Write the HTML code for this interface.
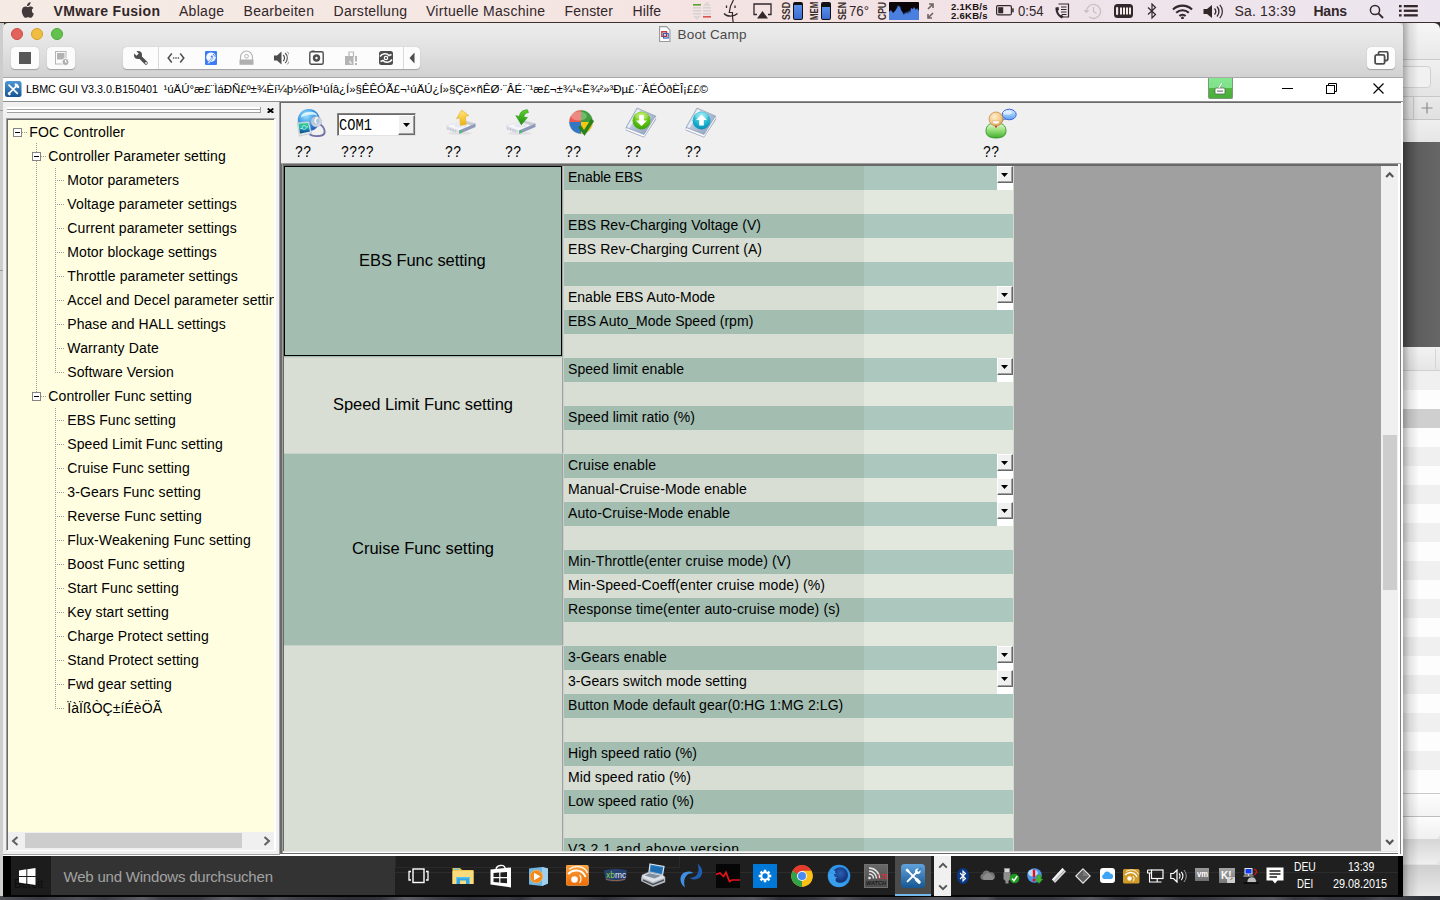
<!DOCTYPE html>
<html lang="de"><head><meta charset="utf-8"><title>LBMC GUI - Boot Camp</title>
<style>
html,body{margin:0;padding:0}
body{width:1440px;height:900px;overflow:hidden;position:relative;background:#2a2c32;font-family:"Liberation Sans",sans-serif;font-kerning:none}
.b{position:absolute;display:block;box-sizing:border-box}
.t{position:absolute;white-space:pre;display:block}
.clip{position:absolute;overflow:hidden}

</style></head>
<body>
<div class="b" style="left:0px;top:0px;width:1440px;height:900px;background:#2c2e34;"></div>
<div class="b" style="left:0px;top:890px;width:1440px;height:10px;background:linear-gradient(90deg,#4e5157 0px,#383b41 39px,#4e5157 78px,#383b41 104px,#5c5f65 143px,#3c3f45 161px,#383b41 198px,#5c5f65 225px,#3c3f45 262px,#4e5157 277px,#3c3f45 298px,#383b41 312px,#2c2f35 349px,#303339 380px,#5c5f65 406px,#3c3f45 438px,#2c2f35 469px,#383b41 507px,#2c2f35 521px,#484b51 534px,#484b51 574px,#2c2f35 605px,#4e5157 641px,#4e5157 663px,#484b51 693px,#484b51 721px,#56595f 753px,#2c2f35 780px,#34373d 813px,#56595f 839px,#383b41 864px,#34373d 902px,#56595f 936px,#484b51 958px,#56595f 986px,#34373d 998px,#34373d 1028px,#34373d 1052px,#56595f 1091px,#34373d 1115px,#2c2f35 1127px,#484b51 1145px,#4e5157 1158px,#303339 1182px,#34373d 1207px,#484b51 1237px,#56595f 1273px,#34373d 1295px,#404349 1316px,#303339 1328px,#34373d 1364px,#484b51 1380px,#34373d 1414px,#2c2f35 1426px);"></div>
<div class="b" style="left:0px;top:23px;width:4px;height:873px;background:#cdcdcd;"></div>
<div class="b" style="left:0px;top:110px;width:3px;height:1px;background:#9a9a9a;"></div>
<div class="b" style="left:0px;top:270px;width:3px;height:1px;background:#9a9a9a;"></div>
<div class="clip" style="left:1403px;top:23px;width:37px;height:873px">
<div class="b" style="left:0px;top:0px;width:37px;height:36px;background:linear-gradient(#f6f6f6,#e9e9e9);border-radius:0 6px 0 0;"></div>
<div class="b" style="left:0px;top:36px;width:37px;height:1px;background:#c9c9c9;"></div>
<div class="b" style="left:0px;top:37px;width:37px;height:36px;background:linear-gradient(#f0f0f0,#e4e4e4);"></div>
<div class="b" style="left:-8px;top:43px;width:36px;height:22px;background:#f1f1f1;border:1px solid #d0d0d0;border-radius:4px;"></div>
<div class="b" style="left:0px;top:73px;width:37px;height:24px;background:linear-gradient(#e9e9e9,#e0e0e0);border-top:1px solid #c8c8c8;border-bottom:1px solid #c4c4c4;"></div>
<div class="b" style="left:10px;top:74px;width:1px;height:22px;background:#c6c6c6;"></div>
<svg class="b" style="left:18px;top:79px;" width="12" height="12" viewBox="0 0 12 12"><path d="M6 0.5 V11.5 M0.5 6 H11.5" stroke="#8a8a8a" stroke-width="1.2"/></svg>
<div class="b" style="left:0px;top:97px;width:37px;height:22px;background:linear-gradient(#efefef,#e6e6e6);"></div>
<div class="b" style="left:0px;top:119px;width:37px;height:205px;background:linear-gradient(90deg,#4f4f4f,#5e5e5e 40%,#676767);"></div>
<div class="b" style="left:0px;top:324px;width:37px;height:24px;background:linear-gradient(#f2f2f2,#e6e6e6);border-bottom:1px solid #d0d0d0;"></div>
<div class="b" style="left:32px;top:326px;width:1px;height:20px;background:#d4d4d4;"></div>
<div class="b" style="left:0px;top:348px;width:37px;height:19px;background:#f0f0f0;"></div>
<div class="b" style="left:0px;top:367px;width:37px;height:19px;background:#fdfdfd;"></div>
<div class="b" style="left:0px;top:386px;width:37px;height:19px;background:#cfcfcf;"></div>
<div class="b" style="left:0px;top:405px;width:37px;height:19px;background:#fdfdfd;"></div>
<div class="b" style="left:0px;top:424px;width:37px;height:19px;background:#f0f0f0;"></div>
<div class="b" style="left:0px;top:443px;width:37px;height:19px;background:#fdfdfd;"></div>
<div class="b" style="left:0px;top:462px;width:37px;height:19px;background:#f0f0f0;"></div>
<div class="b" style="left:0px;top:481px;width:37px;height:19px;background:#fdfdfd;"></div>
<div class="b" style="left:0px;top:500px;width:37px;height:19px;background:#f0f0f0;"></div>
<div class="b" style="left:0px;top:519px;width:37px;height:19px;background:#fdfdfd;"></div>
<div class="b" style="left:0px;top:538px;width:37px;height:19px;background:#f0f0f0;"></div>
<div class="b" style="left:0px;top:557px;width:37px;height:19px;background:#fdfdfd;"></div>
<div class="b" style="left:0px;top:576px;width:37px;height:19px;background:#f0f0f0;"></div>
<div class="b" style="left:0px;top:595px;width:37px;height:19px;background:#fdfdfd;"></div>
<div class="b" style="left:0px;top:614px;width:37px;height:19px;background:#f0f0f0;"></div>
<div class="b" style="left:0px;top:633px;width:37px;height:19px;background:#fdfdfd;"></div>
<div class="b" style="left:0px;top:652px;width:37px;height:19px;background:#f0f0f0;"></div>
<div class="b" style="left:0px;top:671px;width:37px;height:19px;background:#fdfdfd;"></div>
<div class="b" style="left:0px;top:690px;width:37px;height:19px;background:#f0f0f0;"></div>
<div class="b" style="left:0px;top:709px;width:37px;height:19px;background:#fdfdfd;"></div>
<div class="b" style="left:0px;top:728px;width:37px;height:19px;background:#f0f0f0;"></div>
<div class="b" style="left:0px;top:747px;width:37px;height:19px;background:#fdfdfd;"></div>
<div class="b" style="left:0px;top:766px;width:37px;height:19px;background:#f0f0f0;"></div>
<div class="b" style="left:0px;top:766px;width:37px;height:107px;background:#e4e4e4;"></div>
<div class="b" style="left:0px;top:766px;width:37px;height:4px;background:#fdfdfd;"></div>
<div class="b" style="left:0px;top:770px;width:37px;height:23px;background:linear-gradient(#fdfdfd,#f3f3f3);border-top:1px solid #c9c9c9;"></div>
<div class="b" style="left:0px;top:793px;width:37px;height:23px;background:linear-gradient(#fcfcfc,#f0f0f0);border-top:1px solid #bdbdbd;border-radius:0 0 6px 0;"></div>
<div class="b" style="left:0px;top:842px;width:37px;height:31px;background:linear-gradient(#cfcfcf,#e9e9e9);"></div>
<div class="b" style="left:0px;top:816px;width:37px;height:25px;background:linear-gradient(#d6d6d6,#efefef);border-radius:0 0 6px 0;"></div>
<div class="b" style="left:0px;top:793px;width:37px;height:23px;background:linear-gradient(#fcfcfc,#f0f0f0);border-top:1px solid #bdbdbd;border-radius:0 0 6px 0;"></div>
<div class="b" style="left:0px;top:0px;width:16px;height:873px;background:linear-gradient(90deg,rgba(0,0,0,.30),rgba(0,0,0,.10) 40%,rgba(0,0,0,0));"></div>
</div>
<div class="b" style="left:1394px;top:23px;width:9px;height:10px;background:#cfcfcf;"></div>
<div class="b" style="left:0px;top:0px;width:1440px;height:22px;background:linear-gradient(90deg,#f5ebe4,#f5e6e2 35%,#f4e2e3 55%,#efe3ea 75%,#ece5ef);"></div>
<div class="b" style="left:0px;top:22px;width:1440px;height:1px;background:#3b302c;"></div>
<svg class="b" style="left:19.5px;top:2px;" width="14" height="16.8" viewBox="0 0 15 18"><path fill="#43383a" d="M10.3 3.1c.7-.8 1.1-1.9 1-3-1 .1-2.1.7-2.8 1.500-.6.700-1.100 1.800-1 2.800 1.100.1 2.100-.5 2.800-1.300zM12.700 9.500c0-2 1.600-2.900 1.700-3-.9-1.400-2.400-1.500-2.900-1.600-1.200-.1-2.400.7-3 .7s-1.600-.7-2.600-.7c-1.300 0-2.600.8-3.300 2-1.400 2.400-.4 6 1 8 .7 1 1.500 2.100 2.500 2 1-.0 1.400-.6 2.600-.6s1.600.6 2.600.6c1.100 0 1.800-1 2.400-2 .8-1.100 1.100-2.200 1.100-2.300-.0-.0-2.100-.8-2.100-3.100z"/></svg>
<span class="t" style="left:53.50px;top:0.50px;font:700 14px/21px 'Liberation Sans', sans-serif;color:#32272a;letter-spacing:0.318px;">VMware Fusion</span>
<span class="t" style="left:179.00px;top:0.50px;font:400 14px/21px 'Liberation Sans', sans-serif;color:#32272a;letter-spacing:0.281px;">Ablage</span>
<span class="t" style="left:243.50px;top:0.50px;font:400 14px/21px 'Liberation Sans', sans-serif;color:#32272a;letter-spacing:0.309px;">Bearbeiten</span>
<span class="t" style="left:333.50px;top:0.50px;font:400 14px/21px 'Liberation Sans', sans-serif;color:#32272a;letter-spacing:0.267px;">Darstellung</span>
<span class="t" style="left:426.00px;top:0.50px;font:400 14px/21px 'Liberation Sans', sans-serif;color:#32272a;letter-spacing:0.286px;">Virtuelle Maschine</span>
<span class="t" style="left:564.50px;top:0.50px;font:400 14px/21px 'Liberation Sans', sans-serif;color:#32272a;letter-spacing:0.172px;">Fenster</span>
<span class="t" style="left:632.50px;top:0.50px;font:400 14px/21px 'Liberation Sans', sans-serif;color:#32272a;letter-spacing:0.121px;">Hilfe</span>
<svg class="b" style="left:693px;top:0px;" width="19" height="22" viewBox="0 0 19 22"><rect x="0" y="4" width="8" height="1.6" fill="#5aa02c"/><rect x="10" y="7" width="8" height="1.6" fill="#d9d2d2"/><rect x="0" y="7" width="8" height="1.6" fill="#d9d2d2"/><rect x="10" y="10" width="8" height="1.6" fill="#d9d2d2"/><rect x="0" y="10" width="8" height="1.6" fill="#d9d2d2"/><rect x="10" y="13" width="8" height="1.6" fill="#d9d2d2"/><rect x="0" y="13" width="8" height="1.6" fill="#d9d2d2"/><rect x="10" y="16" width="8" height="1.6" fill="#d9534f"/><path d="M10 6 L14 1.5 L18 6 Z" fill="#dcd5d5"/><path d="M0 16 L4 20 L8 16 Z" fill="#dcd5d5"/></svg>
<svg class="b" style="left:723px;top:0px;" width="16" height="22" viewBox="0 0 16 22"><path d="M10.500 0 C8 4 6.500 8.500 6.200 12.500 H9.500 C9.300 15.500 9.600 19 10.200 22" stroke="#32272a" stroke-width="1.2" fill="none"/><path d="M1 13.500 C4 17 11 17 14.500 13.500" stroke="#32272a" stroke-width="1.200" fill="none"/><path d="M3.500 5.500 V8 M12 5.500 V8" stroke="#32272a" stroke-width="1.300"/></svg>
<svg class="b" style="left:753px;top:3px;" width="19" height="16" viewBox="0 0 19 16"><path d="M4 11.500 H1 V1 H18 V11.500 H15" stroke="#32272a" stroke-width="1.300" fill="none"/><path d="M9.500 8 L15 15.500 H4 Z" fill="#32272a"/></svg>
<span class="t" style="left:783px;top:19.900px;height:7px;font:700 10.500px/7px 'Liberation Sans', sans-serif;color:#3a302c;transform-origin:0 0;transform:rotate(-90deg) scaleX(0.8346);">SSD</span>
<div class="b" style="left:793px;top:2px;width:10px;height:18px;background:#111;border-radius:2px;"></div>
<div class="b" style="left:794px;top:5px;width:8px;height:14px;background:linear-gradient(#5b8fe8,#3a6cd0);border-radius:0 0 1px 1px;"></div>
<span class="t" style="left:811px;top:19.900px;height:7px;font:700 10.500px/7px 'Liberation Sans', sans-serif;color:#3a302c;transform-origin:0 0;transform:rotate(-90deg) scaleX(0.7383);">MEM</span>
<div class="b" style="left:821px;top:2px;width:10px;height:18px;background:#111;border-radius:2px;"></div>
<div class="b" style="left:822px;top:7px;width:8px;height:12px;background:linear-gradient(#5b8fe8,#3a6cd0);border-radius:0 0 1px 1px;"></div>
<span class="t" style="left:839px;top:19.900px;height:7px;font:700 10.500px/7px 'Liberation Sans', sans-serif;color:#3a302c;transform-origin:0 0;transform:rotate(-90deg) scaleX(0.8346);">SEN</span>
<span class="t" style="left:849.00px;top:1.00px;font:400 14px/21px 'Liberation Sans', sans-serif;color:#32272a;transform-origin:0 50%;transform:scaleX(0.9446);">76°</span>
<span class="t" style="left:879px;top:19.900px;height:7px;font:700 10.500px/7px 'Liberation Sans', sans-serif;color:#3a302c;transform-origin:0 0;transform:rotate(-90deg) scaleX(0.8132);">CPU</span>
<div class="b" style="left:889px;top:2px;width:30px;height:18px;background:#0b0508;border-radius:1px;"></div>
<svg class="b" style="left:889px;top:2px;" width="30" height="18" viewBox="0 0 30 18"><path d="M0 18 V10 L2 8 L4 11 L6 9 L8 6 L9 3 L10 5 L11 4 L12 8 L14 11 L15 13 L16 10 L17 12 L18 9 L19 12 L20 8 L21 11 L22 6 L24 7 L25 5 L27 8 L28 6 L30 9 V18 Z" fill="#4a7fdf"/></svg>
<svg class="b" style="left:926px;top:3px;" width="9" height="16" viewBox="0 0 9 16"><path d="M2 6 L7 1 M3 1 H7 V5" stroke="#6d6663" stroke-width="1.600" fill="none"/><path d="M7 10 L2 15 M2 11 V15 H6" stroke="#6d6663" stroke-width="1.600" fill="none"/></svg>
<span class="t" style="left:951.00px;top:-0.50px;font:700 9.5px/14px 'Liberation Sans', sans-serif;color:#15100e;letter-spacing:0.273px;">2.1KB/s</span>
<span class="t" style="left:951.00px;top:8.50px;font:700 9.5px/14px 'Liberation Sans', sans-serif;color:#15100e;letter-spacing:0.273px;">2.6KB/s</span>
<svg class="b" style="left:996px;top:5px;" width="18" height="11" viewBox="0 0 18 11"><rect x="0.600" y="0.600" width="14.800" height="9.300" rx="1.500" fill="none" stroke="#32272a" stroke-width="1.200"/><rect x="2.200" y="2.200" width="5" height="6.100" fill="#32272a"/><rect x="16.200" y="3.300" width="1.500" height="4" fill="#32272a"/></svg>
<span class="t" style="left:1017.50px;top:1.00px;font:400 14px/21px 'Liberation Sans', sans-serif;color:#32272a;transform-origin:0 50%;transform:scaleX(0.9358);">0:54</span>
<svg class="b" style="left:1054px;top:3px;" width="16" height="17" viewBox="0 0 16 17"><path d="M4.500 1 H14.500 V14 H9" stroke="#32272a" stroke-width="1.200" fill="none"/><path d="M7 4 H12.500 M7 6.500 H12.500 M7 9 H12.500 M8 11.500 H12.500" stroke="#32272a" stroke-width="1"/><path d="M1.500 4.500 C1 9 4 14 8 15.500 L9.500 13.500 L7.500 11.500 L6.500 12.200 C5 11 4 9 3.800 7.500 L5 7 L4.500 4 Z" fill="#32272a"/></svg>
<svg class="b" style="left:1083px;top:2px;" width="19" height="18" viewBox="0 0 19 18"><path d="M3.500 9.500 A7 7 0 1 1 6 14.800" stroke="#c9c2c2" stroke-width="1.400" fill="none"/><path d="M0.500 8 L3.500 11.500 L6.300 8 Z" fill="#c9c2c2"/><path d="M10.500 5 V9.500 L13.500 11.500" stroke="#c9c2c2" stroke-width="1.300" fill="none"/></svg>
<svg class="b" style="left:1114px;top:4px;" width="19" height="14" viewBox="0 0 19 14"><rect x="0" y="0" width="19" height="14" rx="3.500" fill="#32272a"/><rect x="2" y="3" width="2.200" height="8" rx="1" fill="#f1e8e8"/><rect x="6" y="3.500" width="2" height="7" fill="#f1e8e8"/><rect x="9" y="3.500" width="2" height="7" fill="#f1e8e8"/><rect x="12" y="3.500" width="2" height="7" fill="#f1e8e8"/><rect x="15" y="3.500" width="2" height="7" fill="#f1e8e8"/></svg>
<svg class="b" style="left:1147px;top:3px;" width="10" height="16" viewBox="0 0 10 16"><path d="M1 4.500 L8.500 11.500 L5 15 V1 L8.500 4.500 L1 11.500" stroke="#32272a" stroke-width="1.200" fill="none"/></svg>
<svg class="b" style="left:1172px;top:4px;" width="21" height="15" viewBox="0 0 21 15"><path d="M1 5.500 A13.500 13.500 0 0 1 20 5.500" stroke="#32272a" stroke-width="2.100" fill="none"/><path d="M4.200 8.800 A9 9 0 0 1 16.800 8.800" stroke="#32272a" stroke-width="2.100" fill="none"/><path d="M7.400 12 A4.500 4.500 0 0 1 13.600 12" stroke="#32272a" stroke-width="2.100" fill="none"/><circle cx="10.500" cy="14" r="1.400" fill="#32272a"/></svg>
<svg class="b" style="left:1203px;top:4px;" width="21" height="15" viewBox="0 0 21 15"><path d="M0.500 5 H4 L9 1 V14 L4 10 H0.500 Z" fill="#32272a"/><path d="M11.500 4.500 A4.500 4.500 0 0 1 11.500 10.500" stroke="#32272a" stroke-width="1.300" fill="none"/><path d="M14 2.500 A7.500 7.500 0 0 1 14 12.500" stroke="#32272a" stroke-width="1.300" fill="none"/><path d="M16.800 0.800 A10 10 0 0 1 16.800 14.200" stroke="#32272a" stroke-width="1.200" fill="none"/></svg>
<span class="t" style="left:1234.50px;top:1.00px;font:400 14px/21px 'Liberation Sans', sans-serif;color:#32272a;letter-spacing:0.170px;">Sa. 13:39</span>
<span class="t" style="left:1313.50px;top:1.00px;font:700 14px/21px 'Liberation Sans', sans-serif;color:#32272a;letter-spacing:-0.245px;">Hans</span>
<svg class="b" style="left:1369px;top:4px;" width="15" height="15" viewBox="0 0 15 15"><circle cx="6" cy="6" r="4.600" stroke="#32272a" stroke-width="1.500" fill="none"/><path d="M9.400 9.400 L14 14" stroke="#32272a" stroke-width="1.900"/></svg>
<svg class="b" style="left:1398.5px;top:5px;" width="19" height="12" viewBox="0 0 19 12"><rect x="0" y="0" width="2.600" height="2.300" fill="#32272a"/><rect x="4.800" y="0" width="14" height="2.300" fill="#32272a"/><rect x="0" y="4.6" width="2.600" height="2.300" fill="#32272a"/><rect x="4.800" y="4.6" width="14" height="2.300" fill="#32272a"/><rect x="0" y="9.2" width="2.600" height="2.300" fill="#32272a"/><rect x="4.800" y="9.2" width="14" height="2.300" fill="#32272a"/></svg>
<div class="b" style="left:3px;top:23px;width:1400px;height:55px;background:linear-gradient(#ededed,#e2e2e2 45%,#d1d1d1);border-radius:5px 5px 0 0;"></div>
<div class="b" style="left:3px;top:77px;width:1400px;height:1px;background:#a9a9a9;"></div>
<div class="b" style="left:11px;top:28px;width:12px;height:12px;background:#e2635c;border-radius:50%;border:1px solid #cf4a43;"></div>
<div class="b" style="left:31px;top:28px;width:12px;height:12px;background:#efbd3f;border-radius:50%;border:1px solid #d8a02c;"></div>
<div class="b" style="left:51px;top:28px;width:12px;height:12px;background:#62c24c;border-radius:50%;border:1px solid #4ea83a;"></div>
<svg class="b" style="left:659px;top:25.5px;" width="11.5" height="16.1" viewBox="0 0 10 14"><path d="M0.500 0.500 H6.500 L9.500 3.500 V13.500 H0.500 Z" fill="#fff" stroke="#9a9a9a" stroke-width="1"/><rect x="2.500" y="5" width="4" height="4" fill="none" stroke="#c03030" stroke-width="1.200"/><rect x="4" y="6.500" width="4" height="4" fill="none" stroke="#3060c0" stroke-width="1"/></svg>
<span class="t" style="left:677.50px;top:24.50px;font:400 13.5px/20px 'Liberation Sans', sans-serif;color:#4a4a4a;letter-spacing:0.182px;">Boot Camp</span>
<div class="b" style="left:11px;top:47px;width:28px;height:22px;background:#fcfcfc;border-radius:4px;box-shadow:0 .5px 1px rgba(0,0,0,.25);"></div>
<div class="b" style="left:19px;top:52px;width:12px;height:12px;background:#585858;"></div>
<div class="b" style="left:47px;top:47px;width:28px;height:22px;background:#fbfbfb;border-radius:4px;box-shadow:0 .5px 1px rgba(0,0,0,.25);"></div>
<svg class="b" style="left:55px;top:51px;" width="15" height="15" viewBox="0 0 15 15"><rect x="0.500" y="0.500" width="10.500" height="12.500" fill="none" stroke="#b5b5b5" stroke-width="1"/><rect x="2" y="2" width="7.500" height="6.500" fill="#b2b2b2"/><circle cx="10.500" cy="11" r="3.600" fill="#b0b0b0" stroke="#fbfbfb" stroke-width="1"/><path d="M10.500 9 V11 H12" stroke="#fff" stroke-width="1" fill="none"/></svg>
<div class="b" style="left:123px;top:47px;width:297px;height:22px;background:#fcfcfc;border-radius:4px;box-shadow:0 .5px 1px rgba(0,0,0,.25);"></div>
<div class="b" style="left:158px;top:47px;width:1px;height:22px;background:#d9d9d9;"></div>
<div class="b" style="left:403px;top:47px;width:1px;height:22px;background:#d9d9d9;"></div>
<svg class="b" style="left:133px;top:50px;" width="16" height="16" viewBox="0 0 16 16"><circle cx="5" cy="5" r="4" fill="#4d4d4d"/><path d="M5 5 L13 13" stroke="#4d4d4d" stroke-width="3.400" stroke-linecap="round"/><path d="M4.600 4.600 L0 0" stroke="#fcfcfc" stroke-width="3.200"/><circle cx="13" cy="13" r="0.900" fill="#fcfcfc"/></svg>
<svg class="b" style="left:167px;top:52px;" width="18" height="12" viewBox="0 0 18 12"><path d="M4.800 1.500 L1.200 6 L4.800 10.500 M13.200 1.500 L16.800 6 L13.200 10.500" stroke="#4d4d4d" stroke-width="1.500" fill="none"/><rect x="5.900" y="5.300" width="1.400" height="1.400" fill="#4d4d4d"/><rect x="8.300" y="5.300" width="1.400" height="1.400" fill="#4d4d4d"/><rect x="10.700" y="5.300" width="1.400" height="1.400" fill="#4d4d4d"/></svg>
<svg class="b" style="left:205px;top:51px;" width="12" height="14" viewBox="0 0 12 14"><rect x="0" y="0" width="12" height="14" rx="1" fill="#3d7cf4"/><circle cx="6" cy="6.200" r="4.800" fill="#f4f8ff"/><circle cx="6.800" cy="5.500" r="1.100" fill="#3d7cf4"/><path d="M2.200 12.200 L7.200 6.200 L8.200 7 L4 12.800 Z" fill="#f4f8ff" stroke="#3d7cf4" stroke-width=".6"/><path d="M8 3 L10.500 6" stroke="#3d7cf4" stroke-width=".9"/></svg>
<svg class="b" style="left:239px;top:50px;" width="15" height="15" viewBox="0 0 15 15"><path d="M1.500 10 V7.500 A6 6.500 0 0 1 13.500 7.500 V10" fill="#fcfcfc" stroke="#b4b4b4" stroke-width="1.100"/><circle cx="7.500" cy="6.200" r="1.900" fill="none" stroke="#b4b4b4" stroke-width="1"/><rect x="0.500" y="9.500" width="14" height="5.300" fill="#b0b0b0"/></svg>
<svg class="b" style="left:274px;top:51px;" width="15" height="14" viewBox="0 0 15 14"><path d="M0 4.500 H3 L7.500 0.500 V13.500 L3 9.500 H0 Z" fill="#4d4d4d"/><path d="M9.200 4 A4 4 0 0 1 9.200 10" stroke="#4d4d4d" stroke-width="1.200" fill="none"/><path d="M11.200 2 A7 7 0 0 1 11.200 12" stroke="#4d4d4d" stroke-width="1.100" fill="none"/><path d="M13.300 0.500 A9.500 9.500 0 0 1 13.300 13.500" stroke="#8a8a8a" stroke-width=".9" fill="none"/></svg>
<svg class="b" style="left:309px;top:50px;" width="15" height="15" viewBox="0 0 15 15"><rect x="0.800" y="1.800" width="13.400" height="12.400" rx="1.500" fill="none" stroke="#4d4d4d" stroke-width="1.400"/><rect x="2.500" y="0.500" width="3" height="1.500" fill="#4d4d4d"/><circle cx="7.500" cy="8" r="3.700" fill="#4d4d4d"/><circle cx="7.500" cy="8" r="1.200" fill="#fcfcfc"/></svg>
<svg class="b" style="left:345px;top:51px;" width="13" height="14" viewBox="0 0 13 14"><path d="M4 6 V1 H8.500 V6" fill="none" stroke="#b8b8b8" stroke-width="1.200"/><rect x="0" y="5" width="8.500" height="9" fill="#b4b4b4"/><rect x="10" y="5" width="2" height="5.500" fill="#b4b4b4"/><rect x="10" y="12" width="2" height="2" fill="#b4b4b4"/><path d="M5 9.500 V12 H7" stroke="#fcfcfc" stroke-width="1" fill="none"/></svg>
<svg class="b" style="left:379px;top:51px;" width="14" height="14" viewBox="0 0 14 14"><rect x="0" y="0" width="14" height="14" rx="2.500" fill="#4d4d4d"/><path d="M1 5.500 C3 2 8 2 10 4.500 L12.500 3.500 M13 8.500 C11 12 6 12 4 9.500 L1.500 10.500" stroke="#fcfcfc" stroke-width="1.600" fill="none"/><circle cx="7" cy="7" r="1.700" fill="none" stroke="#fcfcfc" stroke-width="1.200"/></svg>
<svg class="b" style="left:409px;top:52px;" width="6" height="12" viewBox="0 0 6 12"><path d="M5.500 0.500 V11.500 L0.500 6 Z" fill="#4d4d4d"/></svg>
<div class="b" style="left:1367px;top:47px;width:28px;height:22px;background:#fcfcfc;border-radius:4px;box-shadow:0 .5px 1px rgba(0,0,0,.25);"></div>
<svg class="b" style="left:1374px;top:51px;" width="15" height="14" viewBox="0 0 15 14"><path d="M4.500 3.500 V2.200 A1.500 1.500 0 0 1 6 0.700 H12.300 A1.500 1.500 0 0 1 13.800 2.200 V8 A1.500 1.500 0 0 1 12.300 9.500 H11" fill="none" stroke="#4d4d4d" stroke-width="1.800"/><rect x="1.100" y="3.900" width="9.500" height="9" rx="1.500" fill="none" stroke="#4d4d4d" stroke-width="1.800"/></svg>
<div class="b" style="left:3px;top:78px;width:1400px;height:23px;background:#ffffff;"></div>
<div class="b" style="left:3px;top:101px;width:1400px;height:1px;background:#8f8f8f;"></div>
<div class="b" style="left:3px;top:102px;width:1400px;height:754px;background:#f0f0f0;"></div>
<svg class="b" style="left:5px;top:81px;" width="17" height="16" viewBox="0 0 17 16"><defs><linearGradient id="ai" x1="0" y1="0" x2="0" y2="1"><stop offset="0" stop-color="#4f97d6"/><stop offset="1" stop-color="#17558f"/></linearGradient></defs><rect x="0" y="0" width="16.500" height="16" rx="2.500" fill="url(#ai)"/><path d="M4 4.200 L12.300 12.300 M12.300 4.200 L4 12.300" stroke="#fff" stroke-width="1.700" stroke-linecap="round"/><path d="M10.800 3.600 L13 5.800" stroke="#fff" stroke-width="2.600" stroke-linecap="round"/><path d="M3.800 12.500 L4.600 13.300" stroke="#fff" stroke-width="2.200" stroke-linecap="round"/></svg>
<div class="b" style="left:1208px;top:78px;width:25px;height:21px;background:linear-gradient(#85e690 0,#7fe38a 48%,#52b640 49%,#4aae3a 100%);border:1px solid #7a9a7a;border-top:0;border-radius:0 0 2px 2px;"></div>
<svg class="b" style="left:1214px;top:82px;" width="13" height="13" viewBox="0 0 13 13"><rect x="1" y="6" width="10" height="6" rx="1" fill="#fff" stroke="#4d6a4d" stroke-width=".8"/><rect x="3" y="8.500" width="6" height="1.200" fill="#777"/><path d="M5 6 L8 1.500" stroke="#fff" stroke-width="1.400"/><path d="M5.600 6.200 L8.600 1.700" stroke="#667" stroke-width=".5"/></svg>
<div class="b" style="left:1282px;top:88px;width:11px;height:1px;background:#000;"></div>
<svg class="b" style="left:1326px;top:83px;" width="11" height="11" viewBox="0 0 11 11"><path d="M2.500 2.500 V0.500 H10.500 V8.500 H8.500" fill="none" stroke="#000" stroke-width="1"/><rect x="0.500" y="2.500" width="8" height="8" fill="none" stroke="#000" stroke-width="1"/></svg>
<svg class="b" style="left:1373px;top:83px;" width="11" height="11" viewBox="0 0 11 11"><path d="M0.500 0.500 L10.500 10.500 M10.500 0.500 L0.500 10.500" stroke="#000" stroke-width="1.200"/></svg>
<span class="t" style="left:26.00px;top:81.00px;font:400 11.5px/17px 'Liberation Sans', sans-serif;color:#000;transform-origin:0 50%;transform:scaleX(0.9343);">LBMC GUI V3.3.0.B150401</span>
<span class="t" style="left:163.50px;top:81.00px;font:400 11.5px/17px 'Liberation Sans', sans-serif;color:#000;letter-spacing:-0.066px;">¹úÄÚ°æ£¨ÌáÐÑ£º±¾Èí¼þ½öÏÞ¹úÍâ¿Í»§ÊÊÓÃ£¬¹úÄÚ¿Í»§Çë×ñÊØ·¨ÂÉ·¨¹æ£¬±¾¹«Ë¾²»³Ðµ£·¨ÂÉÔðÈÎ¡££©</span>
<div class="b" style="left:7px;top:107px;width:254px;height:2px;background:#ffffff;"></div>
<div class="b" style="left:7px;top:109px;width:254px;height:1px;background:#a0a0a0;"></div>
<div class="b" style="left:7px;top:110px;width:254px;height:2px;background:#ffffff;"></div>
<div class="b" style="left:7px;top:112px;width:254px;height:1px;background:#a0a0a0;"></div>
<div class="b" style="left:260px;top:107px;width:1px;height:6px;background:#a0a0a0;"></div>
<svg class="b" style="left:266.5px;top:107.7px;" width="7" height="5.4" viewBox="0 0 7 5.4"><path d="M0.700 0.600 L6.300 4.800 M6.300 0.600 L0.700 4.800" stroke="#000" stroke-width="1.900" fill="none"/></svg>
<div class="b" style="left:6px;top:118px;width:270px;height:733px;background:#fffee1;border:1px solid #a0a0a0;border-right:2px solid #fff;border-bottom-color:#fff;"></div>
<div class="b" style="left:7px;top:119px;width:267px;height:1px;background:#696969;"></div>
<div class="b" style="left:7px;top:119px;width:1px;height:731px;background:#696969;"></div>
<div class="b" style="left:279px;top:102px;width:1px;height:752px;background:#a0a0a0;"></div>
<div class="b" style="left:280px;top:102px;width:2px;height:752px;background:#696969;"></div>
<div class="b" style="left:8px;top:832px;width:266px;height:18px;background:#f0f0f0;"></div>
<div class="b" style="left:25px;top:833px;width:217px;height:15px;background:#cdcdcd;"></div>
<svg class="b" style="left:11px;top:836px;" width="8" height="10" viewBox="0 0 8 10"><path d="M6.5 1 L2 5 L6.5 9" stroke="#606060" stroke-width="2" fill="none"/></svg>
<svg class="b" style="left:262.5px;top:836px;" width="8" height="10" viewBox="0 0 8 10"><path d="M1.5 1 L6 5 L1.5 9" stroke="#606060" stroke-width="2" fill="none"/></svg>
<div class="b" style="left:22px;top:132px;width:5px;height:1px;background:repeating-linear-gradient(90deg,#9c9c9c 0 1px,transparent 1px 2px);"></div>
<div class="b" style="left:36px;top:143px;width:1px;height:250px;background:repeating-linear-gradient(180deg,#9c9c9c 0 1px,transparent 1px 2px);"></div>
<div class="b" style="left:41px;top:156px;width:5px;height:1px;background:repeating-linear-gradient(90deg,#9c9c9c 0 1px,transparent 1px 2px);"></div>
<div class="b" style="left:41px;top:396px;width:5px;height:1px;background:repeating-linear-gradient(90deg,#9c9c9c 0 1px,transparent 1px 2px);"></div>
<div class="b" style="left:55px;top:168px;width:1px;height:205px;background:repeating-linear-gradient(180deg,#9c9c9c 0 1px,transparent 1px 2px);"></div>
<div class="b" style="left:55px;top:408px;width:1px;height:301px;background:repeating-linear-gradient(180deg,#9c9c9c 0 1px,transparent 1px 2px);"></div>
<div class="b" style="left:13px;top:128px;width:9px;height:9px;background:#fff;border:1px solid #848484;"></div>
<div class="b" style="left:15px;top:132px;width:5px;height:1px;background:#000;"></div>
<div class="b" style="left:32px;top:152px;width:9px;height:9px;background:#fff;border:1px solid #848484;"></div>
<div class="b" style="left:34px;top:156px;width:5px;height:1px;background:#000;"></div>
<div class="b" style="left:32px;top:392px;width:9px;height:9px;background:#fff;border:1px solid #848484;"></div>
<div class="b" style="left:34px;top:396px;width:5px;height:1px;background:#000;"></div>
<span class="t" style="left:29.30px;top:121.50px;font:400 14px/21px 'Liberation Sans', sans-serif;color:#000;letter-spacing:0.120px;">FOC Controller</span>
<span class="t" style="left:48.30px;top:145.50px;font:400 14px/21px 'Liberation Sans', sans-serif;color:#000;letter-spacing:0.086px;">Controller Parameter setting</span>
<div class="clip" style="left:8px;top:121px;width:266px;height:711px">
<div class="b" style="left:47px;top:59px;width:9px;height:1px;background:repeating-linear-gradient(90deg,#9c9c9c 0 1px,transparent 1px 2px);"></div>
<span class="t" style="left:59.30px;top:48.50px;font:400 14px/21px 'Liberation Sans', sans-serif;color:#000;letter-spacing:0.081px;">Motor parameters</span>
<div class="b" style="left:47px;top:83px;width:9px;height:1px;background:repeating-linear-gradient(90deg,#9c9c9c 0 1px,transparent 1px 2px);"></div>
<span class="t" style="left:59.30px;top:72.50px;font:400 14px/21px 'Liberation Sans', sans-serif;color:#000;letter-spacing:0.114px;">Voltage parameter settings</span>
<div class="b" style="left:47px;top:107px;width:9px;height:1px;background:repeating-linear-gradient(90deg,#9c9c9c 0 1px,transparent 1px 2px);"></div>
<span class="t" style="left:59.30px;top:96.50px;font:400 14px/21px 'Liberation Sans', sans-serif;color:#000;letter-spacing:0.115px;">Current parameter settings</span>
<div class="b" style="left:47px;top:131px;width:9px;height:1px;background:repeating-linear-gradient(90deg,#9c9c9c 0 1px,transparent 1px 2px);"></div>
<span class="t" style="left:59.30px;top:120.50px;font:400 14px/21px 'Liberation Sans', sans-serif;color:#000;letter-spacing:0.070px;">Motor blockage settings</span>
<div class="b" style="left:47px;top:155px;width:9px;height:1px;background:repeating-linear-gradient(90deg,#9c9c9c 0 1px,transparent 1px 2px);"></div>
<span class="t" style="left:59.30px;top:144.50px;font:400 14px/21px 'Liberation Sans', sans-serif;color:#000;letter-spacing:0.119px;">Throttle parameter settings</span>
<div class="b" style="left:47px;top:179px;width:9px;height:1px;background:repeating-linear-gradient(90deg,#9c9c9c 0 1px,transparent 1px 2px);"></div>
<span class="t" style="left:59.30px;top:168.50px;font:400 14px/21px 'Liberation Sans', sans-serif;color:#000;letter-spacing:0.097px;">Accel and Decel parameter settings</span>
<div class="b" style="left:47px;top:203px;width:9px;height:1px;background:repeating-linear-gradient(90deg,#9c9c9c 0 1px,transparent 1px 2px);"></div>
<span class="t" style="left:59.30px;top:192.50px;font:400 14px/21px 'Liberation Sans', sans-serif;color:#000;letter-spacing:0.042px;">Phase and HALL settings</span>
<div class="b" style="left:47px;top:227px;width:9px;height:1px;background:repeating-linear-gradient(90deg,#9c9c9c 0 1px,transparent 1px 2px);"></div>
<span class="t" style="left:59.30px;top:216.50px;font:400 14px/21px 'Liberation Sans', sans-serif;color:#000;letter-spacing:0.139px;">Warranty Date</span>
<div class="b" style="left:47px;top:251px;width:9px;height:1px;background:repeating-linear-gradient(90deg,#9c9c9c 0 1px,transparent 1px 2px);"></div>
<span class="t" style="left:59.30px;top:240.50px;font:400 14px/21px 'Liberation Sans', sans-serif;color:#000;letter-spacing:0.037px;">Software Version</span>
</div>
<span class="t" style="left:48.30px;top:385.50px;font:400 14px/21px 'Liberation Sans', sans-serif;color:#000;letter-spacing:0.116px;">Controller Func setting</span>
<div class="b" style="left:55px;top:420px;width:9px;height:1px;background:repeating-linear-gradient(90deg,#9c9c9c 0 1px,transparent 1px 2px);"></div>
<span class="t" style="left:67.30px;top:409.50px;font:400 14px/21px 'Liberation Sans', sans-serif;color:#000;letter-spacing:0.015px;">EBS Func setting</span>
<div class="b" style="left:55px;top:444px;width:9px;height:1px;background:repeating-linear-gradient(90deg,#9c9c9c 0 1px,transparent 1px 2px);"></div>
<span class="t" style="left:67.30px;top:433.50px;font:400 14px/21px 'Liberation Sans', sans-serif;color:#000;letter-spacing:0.057px;">Speed Limit Func setting</span>
<div class="b" style="left:55px;top:468px;width:9px;height:1px;background:repeating-linear-gradient(90deg,#9c9c9c 0 1px,transparent 1px 2px);"></div>
<span class="t" style="left:67.30px;top:457.50px;font:400 14px/21px 'Liberation Sans', sans-serif;color:#000;letter-spacing:0.099px;">Cruise Func setting</span>
<div class="b" style="left:55px;top:492px;width:9px;height:1px;background:repeating-linear-gradient(90deg,#9c9c9c 0 1px,transparent 1px 2px);"></div>
<span class="t" style="left:67.30px;top:481.50px;font:400 14px/21px 'Liberation Sans', sans-serif;color:#000;letter-spacing:0.140px;">3-Gears Func setting</span>
<div class="b" style="left:55px;top:516px;width:9px;height:1px;background:repeating-linear-gradient(90deg,#9c9c9c 0 1px,transparent 1px 2px);"></div>
<span class="t" style="left:67.30px;top:505.50px;font:400 14px/21px 'Liberation Sans', sans-serif;color:#000;letter-spacing:0.111px;">Reverse Func setting</span>
<div class="b" style="left:55px;top:540px;width:9px;height:1px;background:repeating-linear-gradient(90deg,#9c9c9c 0 1px,transparent 1px 2px);"></div>
<span class="t" style="left:67.30px;top:529.50px;font:400 14px/21px 'Liberation Sans', sans-serif;color:#000;letter-spacing:0.090px;">Flux-Weakening Func setting</span>
<div class="b" style="left:55px;top:564px;width:9px;height:1px;background:repeating-linear-gradient(90deg,#9c9c9c 0 1px,transparent 1px 2px);"></div>
<span class="t" style="left:67.30px;top:553.50px;font:400 14px/21px 'Liberation Sans', sans-serif;color:#000;letter-spacing:0.085px;">Boost Func setting</span>
<div class="b" style="left:55px;top:588px;width:9px;height:1px;background:repeating-linear-gradient(90deg,#9c9c9c 0 1px,transparent 1px 2px);"></div>
<span class="t" style="left:67.30px;top:577.50px;font:400 14px/21px 'Liberation Sans', sans-serif;color:#000;letter-spacing:0.099px;">Start Func setting</span>
<div class="b" style="left:55px;top:612px;width:9px;height:1px;background:repeating-linear-gradient(90deg,#9c9c9c 0 1px,transparent 1px 2px);"></div>
<span class="t" style="left:67.30px;top:601.50px;font:400 14px/21px 'Liberation Sans', sans-serif;color:#000;letter-spacing:0.063px;">Key start setting</span>
<div class="b" style="left:55px;top:636px;width:9px;height:1px;background:repeating-linear-gradient(90deg,#9c9c9c 0 1px,transparent 1px 2px);"></div>
<span class="t" style="left:67.30px;top:625.50px;font:400 14px/21px 'Liberation Sans', sans-serif;color:#000;letter-spacing:0.100px;">Charge Protect setting</span>
<div class="b" style="left:55px;top:660px;width:9px;height:1px;background:repeating-linear-gradient(90deg,#9c9c9c 0 1px,transparent 1px 2px);"></div>
<span class="t" style="left:67.30px;top:649.50px;font:400 14px/21px 'Liberation Sans', sans-serif;color:#000;letter-spacing:0.072px;">Stand Protect setting</span>
<div class="b" style="left:55px;top:684px;width:9px;height:1px;background:repeating-linear-gradient(90deg,#9c9c9c 0 1px,transparent 1px 2px);"></div>
<span class="t" style="left:67.30px;top:673.50px;font:400 14px/21px 'Liberation Sans', sans-serif;color:#000;letter-spacing:0.060px;">Fwd gear setting</span>
<div class="b" style="left:55px;top:708px;width:9px;height:1px;background:repeating-linear-gradient(90deg,#9c9c9c 0 1px,transparent 1px 2px);"></div>
<span class="t" style="left:67.30px;top:697.50px;font:400 14px/21px 'Liberation Sans', sans-serif;color:#000;letter-spacing:0.059px;">ÏàÏßÒÇ±íÉèÖÃ</span>
<div class="b" style="left:281px;top:102px;width:1122px;height:1px;background:#696969;"></div>
<div class="b" style="left:281px;top:103px;width:1122px;height:60px;background:#f0f0f0;"></div>
<svg class="b" style="left:0px;top:0px;" width="0" height="0" viewBox="0 0 0 0"><defs><radialGradient id="gl" cx=".38" cy=".3" r=".8"><stop offset="0" stop-color="#9fe3ff"/><stop offset=".55" stop-color="#2c8fe0"/><stop offset="1" stop-color="#1a4fb0"/></radialGradient><linearGradient id="drv" x1="0" y1="0" x2="1" y2="1"><stop offset="0" stop-color="#ffffff"/><stop offset=".6" stop-color="#dfe3ea"/><stop offset="1" stop-color="#aab0c4"/></linearGradient><linearGradient id="yel" x1="0" y1="0" x2="0" y2="1"><stop offset="0" stop-color="#ffe680"/><stop offset="1" stop-color="#eeb410"/></linearGradient><linearGradient id="grn" x1="0" y1="0" x2="0" y2="1"><stop offset="0" stop-color="#5ed02a"/><stop offset="1" stop-color="#1f8f12"/></linearGradient><radialGradient id="gb" cx=".5" cy=".25" r=".8"><stop offset="0" stop-color="#b6f03a"/><stop offset=".7" stop-color="#4fb70c"/><stop offset="1" stop-color="#3a9a06"/></radialGradient><radialGradient id="cb" cx=".5" cy=".25" r=".8"><stop offset="0" stop-color="#7ae9f2"/><stop offset=".7" stop-color="#11a9c8"/><stop offset="1" stop-color="#0a7fb0"/></radialGradient><linearGradient id="bk" x1="0" y1="0" x2="1" y2="1"><stop offset="0" stop-color="#e9eff7"/><stop offset=".5" stop-color="#b4c2d7"/><stop offset="1" stop-color="#8496b4"/></linearGradient><radialGradient id="hd" cx=".4" cy=".35" r=".7"><stop offset="0" stop-color="#fff0cf"/><stop offset=".7" stop-color="#f3c47e"/><stop offset="1" stop-color="#c98f45"/></radialGradient><linearGradient id="bd" x1="0" y1="0" x2="0" y2="1"><stop offset="0" stop-color="#eafbe2"/><stop offset=".45" stop-color="#9ee27f"/><stop offset="1" stop-color="#3fae2a"/></linearGradient><linearGradient id="bb" x1="0" y1="0" x2="0" y2="1"><stop offset="0" stop-color="#d7ecff"/><stop offset="1" stop-color="#5aa2f2"/></linearGradient></defs></svg>
<svg class="b" style="left:296px;top:107px;" width="31" height="31" viewBox="0 0 31 31"><defs><linearGradient id="scr" x1="0" y1="0" x2="0" y2="1"><stop offset="0" stop-color="#3fd08a"/><stop offset=".45" stop-color="#1fb5b0"/><stop offset="1" stop-color="#0a2f8f"/></linearGradient><radialGradient id="pl" cx=".45" cy=".45" r=".6"><stop offset="0" stop-color="#8fd8f0"/><stop offset=".5" stop-color="#b9c3d6"/><stop offset="1" stop-color="#eef1f6"/></radialGradient></defs><circle cx="12.800" cy="13" r="11" fill="url(#gl)"/><path d="M5 10.500 C5 4 20 2.500 21.500 9 C17 6.500 8 8 5 10.500 Z" fill="#e6fbff" opacity=".85"/><path d="M22.500 16 C29.500 20.500 31 27.500 24.500 28.800 C20 29.500 15.500 28.800 13.500 27.300" stroke="#7473a6" stroke-width="1.900" fill="none"/><circle cx="20.200" cy="14.600" r="5.200" fill="url(#pl)" stroke="#aab3c6" stroke-width=".8"/><path d="M22 10.500 C19 11 18 14.500 20.500 16.500" stroke="#f8fafc" stroke-width="1.600" fill="none"/><path d="M1.200 15.500 L13 14.800 L15.600 26.300 L3.400 29.200 Z" fill="#dfe5ec" stroke="#b5bdca" stroke-width=".6"/><path d="M2.400 16.500 L12.200 15.900 L14 24.400 L4 26.600 Z" fill="url(#scr)"/><circle cx="8.200" cy="20.500" r="2" fill="none" stroke="#bff5e6" stroke-width=".8"/><path d="M4.500 21.500 H5.800 M10.800 19.800 H12" stroke="#e8fff8" stroke-width=".9"/><rect x="4.300" y="26.200" width="1.600" height=".9" fill="#7ed321" transform="rotate(-12 4.300 26.200)"/></svg>
<span class="t" style="left:294.50px;top:139.70px;font:400 16.5px/25px 'Liberation Mono', monospace;color:#000;transform-origin:0 50%;transform:scaleX(.83);">??</span>
<div class="b" style="left:337px;top:113px;width:79px;height:23px;background:#ffffff;border:1px solid;border-color:#828282 #e3e3e3 #e3e3e3 #828282;box-shadow:inset 1px 1px 0 #696969;"></div>
<span class="t" style="left:339.00px;top:112.70px;font:400 16.5px/25px 'Liberation Mono', monospace;color:#000;transform-origin:0 50%;transform:scaleX(.83);">COM1</span>
<div class="b" style="left:398px;top:115px;width:17px;height:20px;background:#f0f0f0;border:1px solid;border-color:#fff #696969 #696969 #fff;box-shadow:inset -1px -1px 0 #a0a0a0;"></div>
<svg class="b" style="left:403px;top:123px;" width="8" height="5" viewBox="0 0 8 5"><path d="M0 0 H7 L3.500 4 Z" fill="#000"/></svg>
<span class="t" style="left:340.70px;top:139.70px;font:400 16.5px/25px 'Liberation Mono', monospace;color:#000;transform-origin:0 50%;transform:scaleX(.83);">????</span>
<svg class="b" style="left:445px;top:109px;" width="32" height="27" viewBox="0 0 32 27"><ellipse cx="15" cy="24.300" rx="12" ry="1.600" fill="#000" opacity=".06"/><path d="M1 17 L19 11.500 L30.500 14.500 L14 21.500 Z" fill="#f6f7fb" stroke="#d5d9e2" stroke-width=".5"/><path d="M19 11.500 L30.500 14.500 L26 16.400 L15.500 13 Z" fill="#c9ccd3"/><ellipse cx="15.500" cy="16.300" rx="6.500" ry="2.300" fill="#e7e9f0"/><path d="M14 21.500 L30.500 14.500 V18 L14 25 Z" fill="#8f99ba"/><path d="M1 17 L14 21.500 V25 L1.500 20.500 Z" fill="#dfe2e9"/><path d="M3 18.200 V20.600 M5.500 19 V21.500 M8 19.900 V22.400 M10.500 20.800 V23.200" stroke="#c3c8d4" stroke-width="1.500"/><circle cx="15.800" cy="22.700" r="1.100" fill="#1fd634"/><path d="M17.500 1 L24 7.500 L20.500 8 C20 10.500 20 13 20.300 16 H14.300 C14.300 13 14.500 10.500 15 8.500 L11.300 9 Z" fill="url(#yel)" stroke="#e0b02a" stroke-width=".6" transform="rotate(-8 17 8)"/></svg>
<span class="t" style="left:444.80px;top:139.70px;font:400 16.5px/25px 'Liberation Mono', monospace;color:#000;transform-origin:0 50%;transform:scaleX(.83);">??</span>
<svg class="b" style="left:505px;top:109px;" width="32" height="27" viewBox="0 0 32 27"><ellipse cx="15" cy="24.300" rx="12" ry="1.600" fill="#000" opacity=".06"/><path d="M1 17 L19 11.500 L30.500 14.500 L14 21.500 Z" fill="#f6f7fb" stroke="#d5d9e2" stroke-width=".5"/><path d="M19 11.500 L30.500 14.500 L26 16.400 L15.500 13 Z" fill="#c9ccd3"/><ellipse cx="15.500" cy="16.300" rx="6.500" ry="2.300" fill="#e7e9f0"/><path d="M14 21.500 L30.500 14.500 V18 L14 25 Z" fill="#8f99ba"/><path d="M1 17 L14 21.500 V25 L1.500 20.500 Z" fill="#dfe2e9"/><path d="M3 18.200 V20.600 M5.500 19 V21.500 M8 19.900 V22.400 M10.500 20.800 V23.200" stroke="#c3c8d4" stroke-width="1.500"/><circle cx="15.800" cy="22.700" r="1.100" fill="#1fd634"/><path d="M22.500 0.800 C17.500 0.800 14.800 3.500 14.300 7.500 L10.800 6.500 L16.300 15.800 L22.500 8.500 L18.800 8 C19.200 5.500 20.500 4 23.500 3.500 Z" fill="url(#grn)" stroke="#1f8a12" stroke-width=".5"/></svg>
<span class="t" style="left:504.80px;top:139.70px;font:400 16.5px/25px 'Liberation Mono', monospace;color:#000;transform-origin:0 50%;transform:scaleX(.83);">??</span>
<svg class="b" style="left:568px;top:109px;" width="27" height="28" viewBox="0 0 27 28"><circle cx="13" cy="13" r="12.200" fill="#d8d8d8"/><path d="M13 13 V1.300 A11.700 11.700 0 0 0 1.300 13 Z" fill="#ea5a52"/><path d="M13 13 V1.300 A11.700 11.700 0 0 1 24.700 13 Z" fill="#3f9d3a"/><path d="M13 13 H1.300 A11.700 11.700 0 0 0 13 24.700 Z" fill="#3478c4"/><path d="M13 13 H24.700 A11.700 11.700 0 0 1 13 24.700 Z" fill="#f5c816"/><ellipse cx="11" cy="7" rx="8" ry="4.500" fill="#fff" opacity=".28"/><path d="M10.500 18.500 L13 16.500 L16 21.500 L23 10.500 L25.800 12 L16.500 26.500 Z" fill="#23851b" stroke="#1a6a14" stroke-width=".4"/></svg>
<span class="t" style="left:564.80px;top:139.70px;font:400 16.5px/25px 'Liberation Mono', monospace;color:#000;transform-origin:0 50%;transform:scaleX(.83);">??</span>
<svg class="b" style="left:625px;top:107px;" width="32" height="31" viewBox="0 0 32 31"><path d="M1 23.500 L19 30.500 L31 12.500 L30.500 9.500 L12 1.500 Z" fill="#8e9db8"/><path d="M0.800 22.800 L19 30 L30.800 11.500 L30.500 9 L1 20.500 Z" fill="#ffffff" stroke="#a7b3c8" stroke-width=".5"/><path d="M12 1 L30.500 9 L19 27.500 L1 20.500 Z" fill="url(#bk)" stroke="#8c9bb5" stroke-width=".7"/><path d="M12.500 2.500 L15 3.600 L4.500 21 L2.200 20 Z" fill="#f7fafd" opacity=".75"/><g transform="translate(6.500,4)"><circle cx="10" cy="9.500" r="9" fill="url(#gb)"/><ellipse cx="10" cy="5" rx="6.500" ry="3.600" fill="#fff" opacity=".25"/><path d="M10 15 L15.500 9.500 H12.300 V4 H7.700 V9.500 H4.500 Z" fill="#fff"/></g></svg>
<span class="t" style="left:624.80px;top:139.70px;font:400 16.5px/25px 'Liberation Mono', monospace;color:#000;transform-origin:0 50%;transform:scaleX(.83);">??</span>
<svg class="b" style="left:685px;top:107px;" width="32" height="31" viewBox="0 0 32 31"><path d="M1 23.500 L19 30.500 L31 12.500 L30.500 9.500 L12 1.500 Z" fill="#8e9db8"/><path d="M0.800 22.800 L19 30 L30.800 11.500 L30.500 9 L1 20.500 Z" fill="#ffffff" stroke="#a7b3c8" stroke-width=".5"/><path d="M12 1 L30.500 9 L19 27.500 L1 20.500 Z" fill="url(#bk)" stroke="#8c9bb5" stroke-width=".7"/><path d="M12.500 2.500 L15 3.600 L4.500 21 L2.200 20 Z" fill="#f7fafd" opacity=".75"/><g transform="translate(6.500,4)"><circle cx="10" cy="9.500" r="9" fill="url(#cb)"/><ellipse cx="10" cy="5" rx="6.500" ry="3.600" fill="#fff" opacity=".25"/><path d="M10 3.500 L15.500 9 H12.300 V14.500 H7.700 V9 H4.500 Z" fill="#fff"/></g></svg>
<span class="t" style="left:684.80px;top:139.70px;font:400 16.5px/25px 'Liberation Mono', monospace;color:#000;transform-origin:0 50%;transform:scaleX(.83);">??</span>
<svg class="b" style="left:985px;top:108px;" width="33" height="31" viewBox="0 0 33 31"><ellipse cx="24.200" cy="6.500" rx="7" ry="5.300" fill="url(#bb)" stroke="#3d62d8" stroke-width="1"/><path d="M18 9 L16.500 12.500 L21 10.800 Z" fill="#9cc7f8" stroke="#3d62d8" stroke-width=".8"/><ellipse cx="22.500" cy="4.800" rx="4.500" ry="2" fill="#fff" opacity=".55"/><path d="M1 23 C1 17 5 15 11 15 C17 15 21 17 21 23 C21 28 17 30 11 30 C5 30 1 28 1 23 Z" fill="url(#bd)" stroke="#2c8a2a" stroke-width=".8"/><circle cx="11" cy="11" r="7" fill="url(#hd)" stroke="#b9894b" stroke-width=".7"/><path d="M7.200 13 H14.800 C14.300 15.300 12.800 16 11 16 C9.200 16 7.700 15.300 7.200 13 Z" fill="#fff" stroke="#c79a62" stroke-width=".4"/><path d="M9.800 18 H12.200 L11 20.300 Z" fill="#f01616"/></svg>
<span class="t" style="left:983.00px;top:139.70px;font:400 16.5px/25px 'Liberation Mono', monospace;color:#000;transform-origin:0 50%;transform:scaleX(.83);">??</span>
<div class="b" style="left:281px;top:163px;width:1121px;height:1px;background:#a0a0a0;"></div>
<div class="b" style="left:281px;top:164px;width:1121px;height:2px;background:#696969;"></div>
<div class="b" style="left:282px;top:164px;width:1px;height:690px;background:#a0a0a0;"></div>
<div class="b" style="left:283px;top:165px;width:1px;height:688px;background:#696969;"></div>
<div class="b" style="left:284px;top:166px;width:1097px;height:685px;background:#a0a0a0;"></div>
<div class="b" style="left:283px;top:851px;width:1118px;height:1px;background:#e3e3e3;"></div>
<div class="b" style="left:283px;top:852px;width:1118px;height:1px;background:#ffffff;"></div>
<div class="b" style="left:281px;top:853px;width:1120px;height:1px;background:#696969;"></div>
<div class="b" style="left:3px;top:854px;width:1400px;height:2px;background:#ffffff;"></div>
<div class="b" style="left:3px;top:854px;width:277px;height:1px;background:#a0a0a0;"></div>
<div class="b" style="left:1398px;top:164px;width:2px;height:690px;background:#ffffff;"></div>
<div class="b" style="left:1400px;top:164px;width:1px;height:690px;background:#808080;"></div>
<div class="b" style="left:1401px;top:102px;width:2px;height:752px;background:#fbfbfb;"></div>
<div class="clip" style="left:284px;top:166px;width:730px;height:685px">
<div class="b" style="left:0px;top:0px;width:278px;height:192px;background:#a3bdb1;"></div>
<div class="b" style="left:0px;top:192px;width:278px;height:96px;background:#d8ded4;"></div>
<div class="b" style="left:0px;top:288px;width:278px;height:192px;background:#a3bdb1;"></div>
<div class="b" style="left:0px;top:480px;width:278px;height:214px;background:#d8ded4;"></div>
<div class="b" style="left:279px;top:0px;width:1px;height:685px;background:#c7d0ca;"></div>
<div class="b" style="left:729px;top:0px;width:1px;height:685px;background:#d2d8d2;"></div>
<div class="b" style="left:0px;top:191px;width:279px;height:1px;background:#c7d0ca;"></div>
<div class="b" style="left:0px;top:287px;width:279px;height:1px;background:#c7d0ca;"></div>
<div class="b" style="left:0px;top:479px;width:279px;height:1px;background:#c7d0ca;"></div>
<div class="b" style="left:0px;top:0px;width:278px;height:190px;background:transparent;border:1px solid #000;"></div>
<div class="b" style="left:280px;top:0px;width:300px;height:24px;background:#a3bdb1;"></div>
<div class="b" style="left:580px;top:0px;width:149px;height:24px;background:#acc8be;"></div>
<span class="t" style="left:284.00px;top:0.65px;font:400 14px/21px 'Liberation Sans', sans-serif;color:#000;letter-spacing:-0.089px;">Enable EBS</span>
<div class="b" style="left:713px;top:0px;width:16px;height:24px;background:#ffffff;"></div>
<div class="b" style="left:713px;top:0px;width:16px;height:17px;background:#f0f0f0;border:1px solid;border-color:#fff #696969 #696969 #fff;box-shadow:inset -1px -1px 0 #a0a0a0;"></div>
<svg class="b" style="left:717px;top:7px;" width="7" height="4" viewBox="0 0 7 4"><path d="M0 0 H7 L3.500 4 Z" fill="#000"/></svg>
<div class="b" style="left:280px;top:24px;width:300px;height:24px;background:#d8ded4;"></div>
<div class="b" style="left:580px;top:24px;width:149px;height:24px;background:#e2e8de;"></div>
<div class="b" style="left:280px;top:48px;width:300px;height:24px;background:#a3bdb1;"></div>
<div class="b" style="left:580px;top:48px;width:149px;height:24px;background:#acc8be;"></div>
<span class="t" style="left:284.00px;top:48.65px;font:400 14px/21px 'Liberation Sans', sans-serif;color:#000;letter-spacing:0.058px;">EBS Rev-Charging Voltage (V)</span>
<div class="b" style="left:280px;top:72px;width:300px;height:24px;background:#d8ded4;"></div>
<div class="b" style="left:580px;top:72px;width:149px;height:24px;background:#e2e8de;"></div>
<span class="t" style="left:284.00px;top:72.65px;font:400 14px/21px 'Liberation Sans', sans-serif;color:#000;letter-spacing:0.096px;">EBS Rev-Charging Current (A)</span>
<div class="b" style="left:280px;top:96px;width:300px;height:24px;background:#a3bdb1;"></div>
<div class="b" style="left:580px;top:96px;width:149px;height:24px;background:#acc8be;"></div>
<div class="b" style="left:280px;top:120px;width:300px;height:24px;background:#d8ded4;"></div>
<div class="b" style="left:580px;top:120px;width:149px;height:24px;background:#e2e8de;"></div>
<span class="t" style="left:284.00px;top:120.65px;font:400 14px/21px 'Liberation Sans', sans-serif;color:#000;letter-spacing:-0.006px;">Enable EBS Auto-Mode</span>
<div class="b" style="left:713px;top:120px;width:16px;height:24px;background:#ffffff;"></div>
<div class="b" style="left:713px;top:120px;width:16px;height:17px;background:#f0f0f0;border:1px solid;border-color:#fff #696969 #696969 #fff;box-shadow:inset -1px -1px 0 #a0a0a0;"></div>
<svg class="b" style="left:717px;top:127px;" width="7" height="4" viewBox="0 0 7 4"><path d="M0 0 H7 L3.500 4 Z" fill="#000"/></svg>
<div class="b" style="left:280px;top:144px;width:300px;height:24px;background:#a3bdb1;"></div>
<div class="b" style="left:580px;top:144px;width:149px;height:24px;background:#acc8be;"></div>
<span class="t" style="left:284.00px;top:144.65px;font:400 14px/21px 'Liberation Sans', sans-serif;color:#000;letter-spacing:0.036px;">EBS Auto_Mode Speed (rpm)</span>
<div class="b" style="left:280px;top:168px;width:300px;height:24px;background:#d8ded4;"></div>
<div class="b" style="left:580px;top:168px;width:149px;height:24px;background:#e2e8de;"></div>
<div class="b" style="left:280px;top:192px;width:300px;height:24px;background:#a3bdb1;"></div>
<div class="b" style="left:580px;top:192px;width:149px;height:24px;background:#acc8be;"></div>
<span class="t" style="left:284.00px;top:192.65px;font:400 14px/21px 'Liberation Sans', sans-serif;color:#000;letter-spacing:0.048px;">Speed limit enable</span>
<div class="b" style="left:713px;top:192px;width:16px;height:24px;background:#ffffff;"></div>
<div class="b" style="left:713px;top:192px;width:16px;height:17px;background:#f0f0f0;border:1px solid;border-color:#fff #696969 #696969 #fff;box-shadow:inset -1px -1px 0 #a0a0a0;"></div>
<svg class="b" style="left:717px;top:199px;" width="7" height="4" viewBox="0 0 7 4"><path d="M0 0 H7 L3.500 4 Z" fill="#000"/></svg>
<div class="b" style="left:280px;top:216px;width:300px;height:24px;background:#d8ded4;"></div>
<div class="b" style="left:580px;top:216px;width:149px;height:24px;background:#e2e8de;"></div>
<div class="b" style="left:280px;top:240px;width:300px;height:24px;background:#a3bdb1;"></div>
<div class="b" style="left:580px;top:240px;width:149px;height:24px;background:#acc8be;"></div>
<span class="t" style="left:284.00px;top:240.65px;font:400 14px/21px 'Liberation Sans', sans-serif;color:#000;letter-spacing:0.048px;">Speed limit ratio (%)</span>
<div class="b" style="left:280px;top:264px;width:300px;height:24px;background:#d8ded4;"></div>
<div class="b" style="left:580px;top:264px;width:149px;height:24px;background:#e2e8de;"></div>
<div class="b" style="left:280px;top:288px;width:300px;height:24px;background:#a3bdb1;"></div>
<div class="b" style="left:580px;top:288px;width:149px;height:24px;background:#acc8be;"></div>
<span class="t" style="left:284.00px;top:288.65px;font:400 14px/21px 'Liberation Sans', sans-serif;color:#000;letter-spacing:0.134px;">Cruise enable</span>
<div class="b" style="left:713px;top:288px;width:16px;height:24px;background:#ffffff;"></div>
<div class="b" style="left:713px;top:288px;width:16px;height:17px;background:#f0f0f0;border:1px solid;border-color:#fff #696969 #696969 #fff;box-shadow:inset -1px -1px 0 #a0a0a0;"></div>
<svg class="b" style="left:717px;top:295px;" width="7" height="4" viewBox="0 0 7 4"><path d="M0 0 H7 L3.500 4 Z" fill="#000"/></svg>
<div class="b" style="left:280px;top:312px;width:300px;height:24px;background:#d8ded4;"></div>
<div class="b" style="left:580px;top:312px;width:149px;height:24px;background:#e2e8de;"></div>
<span class="t" style="left:284.00px;top:312.65px;font:400 14px/21px 'Liberation Sans', sans-serif;color:#000;letter-spacing:0.085px;">Manual-Cruise-Mode enable</span>
<div class="b" style="left:713px;top:312px;width:16px;height:24px;background:#ffffff;"></div>
<div class="b" style="left:713px;top:312px;width:16px;height:17px;background:#f0f0f0;border:1px solid;border-color:#fff #696969 #696969 #fff;box-shadow:inset -1px -1px 0 #a0a0a0;"></div>
<svg class="b" style="left:717px;top:319px;" width="7" height="4" viewBox="0 0 7 4"><path d="M0 0 H7 L3.500 4 Z" fill="#000"/></svg>
<div class="b" style="left:280px;top:336px;width:300px;height:24px;background:#a3bdb1;"></div>
<div class="b" style="left:580px;top:336px;width:149px;height:24px;background:#acc8be;"></div>
<span class="t" style="left:284.00px;top:336.65px;font:400 14px/21px 'Liberation Sans', sans-serif;color:#000;letter-spacing:0.112px;">Auto-Cruise-Mode enable</span>
<div class="b" style="left:713px;top:336px;width:16px;height:24px;background:#ffffff;"></div>
<div class="b" style="left:713px;top:336px;width:16px;height:17px;background:#f0f0f0;border:1px solid;border-color:#fff #696969 #696969 #fff;box-shadow:inset -1px -1px 0 #a0a0a0;"></div>
<svg class="b" style="left:717px;top:343px;" width="7" height="4" viewBox="0 0 7 4"><path d="M0 0 H7 L3.500 4 Z" fill="#000"/></svg>
<div class="b" style="left:280px;top:360px;width:300px;height:24px;background:#d8ded4;"></div>
<div class="b" style="left:580px;top:360px;width:149px;height:24px;background:#e2e8de;"></div>
<div class="b" style="left:280px;top:384px;width:300px;height:24px;background:#a3bdb1;"></div>
<div class="b" style="left:580px;top:384px;width:149px;height:24px;background:#acc8be;"></div>
<span class="t" style="left:284.00px;top:384.65px;font:400 14px/21px 'Liberation Sans', sans-serif;color:#000;letter-spacing:0.129px;">Min-Throttle(enter cruise mode) (V)</span>
<div class="b" style="left:280px;top:408px;width:300px;height:24px;background:#d8ded4;"></div>
<div class="b" style="left:580px;top:408px;width:149px;height:24px;background:#e2e8de;"></div>
<span class="t" style="left:284.00px;top:408.65px;font:400 14px/21px 'Liberation Sans', sans-serif;color:#000;letter-spacing:0.118px;">Min-Speed-Coeff(enter cruise mode) (%)</span>
<div class="b" style="left:280px;top:432px;width:300px;height:24px;background:#a3bdb1;"></div>
<div class="b" style="left:580px;top:432px;width:149px;height:24px;background:#acc8be;"></div>
<span class="t" style="left:284.00px;top:432.65px;font:400 14px/21px 'Liberation Sans', sans-serif;color:#000;letter-spacing:0.128px;">Response time(enter auto-cruise mode) (s)</span>
<div class="b" style="left:280px;top:456px;width:300px;height:24px;background:#d8ded4;"></div>
<div class="b" style="left:580px;top:456px;width:149px;height:24px;background:#e2e8de;"></div>
<div class="b" style="left:280px;top:480px;width:300px;height:24px;background:#a3bdb1;"></div>
<div class="b" style="left:580px;top:480px;width:149px;height:24px;background:#acc8be;"></div>
<span class="t" style="left:284.00px;top:480.65px;font:400 14px/21px 'Liberation Sans', sans-serif;color:#000;letter-spacing:0.168px;">3-Gears enable</span>
<div class="b" style="left:713px;top:480px;width:16px;height:24px;background:#ffffff;"></div>
<div class="b" style="left:713px;top:480px;width:16px;height:17px;background:#f0f0f0;border:1px solid;border-color:#fff #696969 #696969 #fff;box-shadow:inset -1px -1px 0 #a0a0a0;"></div>
<svg class="b" style="left:717px;top:487px;" width="7" height="4" viewBox="0 0 7 4"><path d="M0 0 H7 L3.500 4 Z" fill="#000"/></svg>
<div class="b" style="left:280px;top:504px;width:300px;height:24px;background:#d8ded4;"></div>
<div class="b" style="left:580px;top:504px;width:149px;height:24px;background:#e2e8de;"></div>
<span class="t" style="left:284.00px;top:504.65px;font:400 14px/21px 'Liberation Sans', sans-serif;color:#000;letter-spacing:0.050px;">3-Gears switch mode setting</span>
<div class="b" style="left:713px;top:504px;width:16px;height:24px;background:#ffffff;"></div>
<div class="b" style="left:713px;top:504px;width:16px;height:17px;background:#f0f0f0;border:1px solid;border-color:#fff #696969 #696969 #fff;box-shadow:inset -1px -1px 0 #a0a0a0;"></div>
<svg class="b" style="left:717px;top:511px;" width="7" height="4" viewBox="0 0 7 4"><path d="M0 0 H7 L3.500 4 Z" fill="#000"/></svg>
<div class="b" style="left:280px;top:528px;width:300px;height:24px;background:#a3bdb1;"></div>
<div class="b" style="left:580px;top:528px;width:149px;height:24px;background:#acc8be;"></div>
<span class="t" style="left:284.00px;top:528.65px;font:400 14px/21px 'Liberation Sans', sans-serif;color:#000;letter-spacing:0.095px;">Button Mode default gear(0:HG 1:MG 2:LG)</span>
<div class="b" style="left:280px;top:552px;width:300px;height:24px;background:#d8ded4;"></div>
<div class="b" style="left:580px;top:552px;width:149px;height:24px;background:#e2e8de;"></div>
<div class="b" style="left:280px;top:576px;width:300px;height:24px;background:#a3bdb1;"></div>
<div class="b" style="left:580px;top:576px;width:149px;height:24px;background:#acc8be;"></div>
<span class="t" style="left:284.00px;top:576.65px;font:400 14px/21px 'Liberation Sans', sans-serif;color:#000;letter-spacing:0.072px;">High speed ratio (%)</span>
<div class="b" style="left:280px;top:600px;width:300px;height:24px;background:#d8ded4;"></div>
<div class="b" style="left:580px;top:600px;width:149px;height:24px;background:#e2e8de;"></div>
<span class="t" style="left:284.00px;top:600.65px;font:400 14px/21px 'Liberation Sans', sans-serif;color:#000;letter-spacing:0.089px;">Mid speed ratio (%)</span>
<div class="b" style="left:280px;top:624px;width:300px;height:24px;background:#a3bdb1;"></div>
<div class="b" style="left:580px;top:624px;width:149px;height:24px;background:#acc8be;"></div>
<span class="t" style="left:284.00px;top:624.65px;font:400 14px/21px 'Liberation Sans', sans-serif;color:#000;letter-spacing:0.082px;">Low speed ratio (%)</span>
<div class="b" style="left:280px;top:648px;width:300px;height:24px;background:#d8ded4;"></div>
<div class="b" style="left:580px;top:648px;width:149px;height:24px;background:#e2e8de;"></div>
<div class="b" style="left:280px;top:672px;width:300px;height:24px;background:#a3bdb1;"></div>
<div class="b" style="left:580px;top:672px;width:149px;height:24px;background:#acc8be;"></div>
<span class="t" style="left:284.00px;top:672.65px;font:400 14px/21px 'Liberation Sans', sans-serif;color:#000;letter-spacing:0.531px;">V3.2.1 and above version</span>
</div>
<span class="t" style="left:359.00px;top:247.90px;font:400 16.5px/25px 'Liberation Sans', sans-serif;color:#000;letter-spacing:-0.052px;">EBS Func setting</span>
<span class="t" style="left:333.00px;top:391.90px;font:400 16.5px/25px 'Liberation Sans', sans-serif;color:#000;letter-spacing:-0.070px;">Speed Limit Func setting</span>
<span class="t" style="left:352.00px;top:535.90px;font:400 16.5px/25px 'Liberation Sans', sans-serif;color:#000;letter-spacing:-0.009px;">Cruise Func setting</span>
<div class="b" style="left:1381px;top:166px;width:17px;height:685px;background:#f0f0f0;"></div>
<div class="b" style="left:1383px;top:435px;width:14px;height:155px;background:#cdcdcd;"></div>
<svg class="b" style="left:1385px;top:171px;" width="10" height="8" viewBox="0 0 10 8"><path d="M1.200 6 L4.700 2.300 L8.200 6" stroke="#555" stroke-width="2.200" fill="none"/></svg>
<svg class="b" style="left:1385px;top:838px;" width="10" height="8" viewBox="0 0 10 8"><path d="M1.200 2 L4.700 5.700 L8.200 2" stroke="#555" stroke-width="2.200" fill="none"/></svg>
<div class="b" style="left:3px;top:856px;width:1395px;height:40px;background:#1f1f1f;"></div>
<div class="b" style="left:1398px;top:856px;width:5px;height:40px;background:#000;"></div>
<div class="b" style="left:3px;top:895px;width:1400px;height:1.5px;background:#050505;"></div>
<div class="b" style="left:3px;top:856px;width:8px;height:40px;background:#000;"></div>
<div class="b" style="left:11px;top:856px;width:40px;height:39px;background:#1c1c1c;"></div>
<div class="b" style="left:395px;top:872px;width:1003px;height:1px;background:#2c2c2c;"></div>
<div class="b" style="left:395px;top:856px;width:285px;height:12px;background:transparent;border:1px solid #2a2a2a;border-top:0;"></div>
<span class="t" style="left:13.50px;top:873.50px;font:400 13.5px/20px 'Liberation Sans', sans-serif;color:#0c0c0c;transform-origin:0 50%;transform:scaleX(0.8276);">Bereit</span>
<svg class="b" style="left:19px;top:868px;" width="17" height="17" viewBox="0 0 17 17"><path d="M0 2.400 L7.300 1.300 V8 H0 Z M8.300 1.150 L16.500 0 V8 H8.300 Z M0 9 H7.300 V15.700 L0 14.600 Z M8.300 9 H16.500 V17 L8.300 15.850 Z" fill="#fff"/></svg>
<div class="b" style="left:51px;top:856px;width:344px;height:39px;background:#333333;"></div>
<span class="t" style="left:63.50px;top:866.00px;font:400 15px/22px 'Liberation Sans', sans-serif;color:#a2a2a2;letter-spacing:-0.206px;">Web und Windows durchsuchen</span>
<svg class="b" style="left:408px;top:868px;" width="22" height="16" viewBox="0 0 22 16"><rect x="5" y="1" width="11" height="13.500" fill="none" stroke="#fff" stroke-width="1.400"/><path d="M3 3.500 H1 V12 H3 M18 3.500 H20 V12 H18" fill="none" stroke="#fff" stroke-width="1.300"/></svg>
<svg class="b" style="left:452px;top:866px;" width="23" height="20" viewBox="0 0 23 20"><path d="M0.500 2 H8 L10 4 H21.500 V18 H0.500 Z" fill="#f6c64c"/><path d="M0.500 5 H21.500 V18 H0.500 Z" fill="#fbdc7c"/><rect x="2" y="2.600" width="5.500" height="1.200" fill="#5ec4f2"/><path d="M4.500 18 V11 H17.500 V18 H14 V14.500 H8 V18 Z" fill="#2fa7ea"/><path d="M4.500 11 H17.500 V12.500 H4.500 Z" fill="#56c0f5"/></svg>
<svg class="b" style="left:490px;top:863px;" width="22" height="25" viewBox="0 0 22 25"><path d="M6 7 C6 1.500 15 0.500 15.500 6.500" fill="none" stroke="#fff" stroke-width="1.400"/><path d="M0.500 6.500 L21 4.500 V24.500 L0.500 21.500 Z" fill="#fff"/><path d="M3.500 10 L9.200 9.600 V14 H3.500 Z M10.400 9.500 L17 9 V14 H10.400 Z M3.500 15.200 H9.200 V19.600 L3.500 19.100 Z M10.400 15.200 H17 V20.300 L10.400 19.700 Z" fill="#1f1f1f"/></svg>
<svg class="b" style="left:528px;top:866px;" width="21" height="21" viewBox="0 0 21 21"><path d="M1 2.500 L14 1 L20 2.500 V17.500 L14 20 L1 18.500 Z" fill="#6fb6e2"/><path d="M14 1 L20 2.500 V17.500 L14 20 Z" fill="#9fd0ee"/><circle cx="8.300" cy="10.500" r="6.300" fill="#f28a1e"/><circle cx="8.300" cy="10.500" r="6.300" fill="none" stroke="#ffb04d" stroke-width=".8"/><path d="M6 6.800 L12.500 10.500 L6 14.200 Z" fill="#fff"/></svg>
<svg class="b" style="left:566px;top:865px;" width="23" height="21" viewBox="0 0 23 21"><defs><linearGradient id="og" x1="0" y1="0" x2="0" y2="1"><stop offset="0" stop-color="#f9a03c"/><stop offset="1" stop-color="#ee6d08"/></linearGradient></defs><rect x="0" y="0" width="22.500" height="20.500" rx="2" fill="url(#og)" stroke="#f7b566" stroke-width=".6"/><circle cx="8.500" cy="14.500" r="3.300" fill="#fff"/><path d="M2 9 C8 3 17 5 19.500 12" stroke="#fff" stroke-width="2" fill="none"/><path d="M3 4.500 C9 -0.500 19 1 21.500 8" stroke="#fff" stroke-width="1.400" fill="none" opacity=".85"/><path d="M13.500 18 C15.500 16 15.500 12 13.500 10" stroke="#fff" stroke-width="1.300" fill="none" opacity=".9"/></svg>
<svg class="b" style="left:603px;top:869px;" width="25" height="14" viewBox="0 0 25 14"><path d="M1 1.500 C8 -0.500 17 -0.500 24 1.500 L22.500 11 C16 13 9 13 2.500 11 Z" fill="#26406f"/><path d="M3 10.300 C9 12 16 12 22 10.300" stroke="#c8742a" stroke-width=".7" fill="none"/></svg>
<span class="t" style="left:605.50px;top:867.50px;font:400 9.5px/14px 'Liberation Sans', sans-serif;color:#8fd24a;transform-origin:0 50%;transform:scaleX(0.8958);">xb</span>
<span class="t" style="left:614.80px;top:867.50px;font:400 9.5px/14px 'Liberation Sans', sans-serif;color:#e8eef8;transform-origin:0 50%;transform:scaleX(0.8838);">mc</span>
<svg class="b" style="left:641px;top:863px;" width="25" height="24" viewBox="0 0 25 24"><path d="M9 1 L23 3.500 L21.500 12 L8 9 Z" fill="#2e82c6" stroke="#dfe6ee" stroke-width="1.200"/><path d="M10.500 3 L21.500 5 L20.500 10.500 L9.800 8 Z" fill="#1e6db2"/><path d="M1 12 L8 9 L21.500 12 L24 14 V19 L12 23.500 L0.500 18 Z" fill="#dfe3e8" stroke="#8e959d" stroke-width=".6"/><path d="M3.500 12.500 L8.500 10.300 L20 12.800 L13.500 15.500 Z" fill="#7f8ea0"/><path d="M0.500 14 L12 19 L24 14.500 V19 L12 23.500 L0.500 18 Z" fill="#b9bec5"/><path d="M2 17 L12 21.500 L23 17" stroke="#4d535a" stroke-width="1.400" fill="none"/></svg>
<svg class="b" style="left:679px;top:863px;" width="25" height="25" viewBox="0 0 25 25"><path d="M18.500 0.500 C26 6 24.500 17 14.500 16.500 C12.500 16.400 11.300 15.500 10.500 14.500 C16 16 22 10.500 18.500 0.500 Z" fill="#1d5cae"/><path d="M6 24.500 C-1.500 19 0.500 8 10.500 8.500 C12.500 8.600 13.700 9.500 14.500 10.500 C9 9 3 14.500 6 24.500 Z" fill="#3f8fe2"/></svg>
<div class="b" style="left:716px;top:864px;width:24px;height:24px;background:#060606;"></div>
<svg class="b" style="left:716px;top:864px;" width="24" height="24" viewBox="0 0 24 24"><path d="M0 10.500 L4 9 L7.500 12.500 L10 8.500 L13.500 17.500 L16 16 H24" stroke="#e8121c" stroke-width="1.700" fill="none"/></svg>
<div class="b" style="left:753px;top:864px;width:24px;height:24px;background:#0078d7;"></div>
<svg class="b" style="left:753px;top:864px;" width="24" height="24" viewBox="0 0 24 24"><g transform="translate(12,12)"><rect x="-1.250" y="-6.300" width="2.500" height="2.800" fill="#fff" transform="rotate(0)"/><rect x="-1.250" y="-6.300" width="2.500" height="2.800" fill="#fff" transform="rotate(45)"/><rect x="-1.250" y="-6.300" width="2.500" height="2.800" fill="#fff" transform="rotate(90)"/><rect x="-1.250" y="-6.300" width="2.500" height="2.800" fill="#fff" transform="rotate(135)"/><rect x="-1.250" y="-6.300" width="2.500" height="2.800" fill="#fff" transform="rotate(180)"/><rect x="-1.250" y="-6.300" width="2.500" height="2.800" fill="#fff" transform="rotate(225)"/><rect x="-1.250" y="-6.300" width="2.500" height="2.800" fill="#fff" transform="rotate(270)"/><rect x="-1.250" y="-6.300" width="2.500" height="2.800" fill="#fff" transform="rotate(315)"/><circle r="3.700" fill="none" stroke="#fff" stroke-width="2"/></g></svg>
<svg class="b" style="left:791px;top:865px;" width="22" height="22" viewBox="0 0 22 22"><circle cx="11" cy="11" r="10.700" fill="#fbc116"/><path d="M11 11 L1.750 5.650 A10.700 10.700 0 0 1 20.250 5.650 Z" fill="#e33b2e"/><path d="M11 11 L1.750 5.650 A10.700 10.700 0 0 0 11 21.700 Z" fill="#2fa24b"/><path d="M11 6 H20.500 A10.700 10.700 0 0 0 1.700 5.700 L6.500 9 Z" fill="#e33b2e"/><path d="M15.400 13.500 L11 21.700 A10.700 10.700 0 0 0 20.300 5.700 H11 Z" fill="#fbc116"/><circle cx="11" cy="11" r="5" fill="#f4f4f4"/><circle cx="11" cy="11" r="4" fill="#4a8af4"/></svg>
<svg class="b" style="left:827px;top:864px;" width="24" height="24" viewBox="0 0 24 24"><defs><radialGradient id="ffd" cx=".5" cy=".4" r=".6"><stop offset="0" stop-color="#2a62b8"/><stop offset="1" stop-color="#102c6e"/></radialGradient></defs><circle cx="12" cy="12" r="11.300" fill="#2f93e6"/><circle cx="13.200" cy="11" r="7.800" fill="url(#ffd)"/><path d="M2 8 C3.500 9.500 5.500 9.800 7 9.200 C6.500 11.500 8 13 10 13.500 C8 14.500 8 17 10 18.500 C12.500 20.500 17 20 20.500 17 C18.500 21.500 13 24 8 22 C2.500 19.500 0 13.500 2 8 Z" fill="#3aa0ee"/><path d="M4 4.500 C5 6.500 6.500 7 8.500 6.500 C7.500 8 8 9.500 9.500 10 C7 10.500 5 9.500 4 8 Z" fill="#3aa0ee"/></svg>
<div class="b" style="left:864px;top:864px;width:24px;height:24px;background:linear-gradient(#686868,#4c4c4c);border:1px solid #707070;"></div>
<svg class="b" style="left:864px;top:864px;" width="24" height="24" viewBox="0 0 24 24"><circle cx="5.500" cy="14" r="1.300" fill="#e8e8e8"/><path d="M5 10 A4.500 4.500 0 0 1 9.500 14.500 M5 7 A7.500 7.500 0 0 1 12.500 14.500 M5 4 A10.500 10.500 0 0 1 15.500 14.500" stroke="#e8e8e8" stroke-width="1.500" fill="none"/></svg>
<span class="t" style="left:877.50px;top:872.00px;font:700 6.5px/10px 'Liberation Sans', sans-serif;color:#d8323c;transform-origin:0 50%;transform:scaleX(0.8053);">LTE</span>
<span class="t" style="left:866.00px;top:879.00px;font:700 5.5px/8px 'Liberation Sans', sans-serif;color:#1a1a1a;letter-spacing:0.059px;font-style:italic;">WATCH</span>
<div class="b" style="left:895px;top:856px;width:36px;height:38px;background:#4b4b4b;"></div>
<div class="b" style="left:895px;top:894px;width:36px;height:2px;background:#76b9ed;"></div>
<svg class="b" style="left:901px;top:864px;" width="24" height="24" viewBox="0 0 24 24"><defs><linearGradient id="ai2" x1="0" y1="0" x2="0" y2="1"><stop offset="0" stop-color="#60a3dc"/><stop offset="1" stop-color="#185791"/></linearGradient></defs><rect x="0" y="0" width="24" height="24" rx="3.500" fill="url(#ai2)"/><path d="M6.800 6.800 L17.600 17.600" stroke="#fff" stroke-width="1.900" stroke-linecap="round"/><path d="M16.200 7.800 L6.600 17.400" stroke="#fff" stroke-width="2" stroke-linecap="round"/><circle cx="16.800" cy="7.200" r="2.700" fill="#fff"/><path d="M16.800 7.200 L20 4" stroke="#3d83c0" stroke-width="2"/><path d="M15.500 15.500 L18.200 18.200" stroke="#fff" stroke-width="3.200" stroke-linecap="round"/><path d="M6 6 L7.200 7.200" stroke="#fff" stroke-width="2.600" stroke-linecap="round"/></svg>
<div class="b" style="left:934px;top:856px;width:17px;height:40px;background:#f0f0f0;"></div>
<svg class="b" style="left:938px;top:862px;" width="10" height="7" viewBox="0 0 10 7"><path d="M1.200 5.600 L5 1.900 L8.800 5.600" stroke="#555" stroke-width="2" fill="none"/></svg>
<svg class="b" style="left:938px;top:884px;" width="10" height="7" viewBox="0 0 10 7"><path d="M1.200 1.400 L5 5.100 L8.800 1.400" stroke="#555" stroke-width="2" fill="none"/></svg>
<svg class="b" style="left:957px;top:868px;" width="12" height="16" viewBox="0 0 12 16"><ellipse cx="6" cy="8" rx="6" ry="8" fill="#0a3a86"/><path d="M3 5 L8.500 10.500 L6 13 V3 L8.500 5.500 L3 11" stroke="#fff" stroke-width="1.100" fill="none"/></svg>
<svg class="b" style="left:979px;top:869px;" width="16" height="12" viewBox="0 0 16 12"><path d="M4 11 A3.200 3.200 0 0 1 3.600 4.800 A4 4 0 0 1 11 3.500 A3.700 3.700 0 0 1 13 11 Z" fill="#747474"/><path d="M5.500 11 A2.800 2.800 0 0 1 6 5.800 A3.600 3.600 0 0 1 12.500 6.500 A2.400 2.400 0 0 1 13.500 11 Z" fill="#8b8b8b"/></svg>
<svg class="b" style="left:1003px;top:868px;" width="17" height="16" viewBox="0 0 17 16"><rect x="1.500" y="0.500" width="5" height="4" fill="#d8d8d8" stroke="#9b9b9b" stroke-width=".6"/><path d="M0.500 4.500 H7.500 V11 L5.500 13 V15.500 H2.500 V13 L0.500 11 Z" fill="#8f8f8f"/><circle cx="11.500" cy="10.500" r="4.800" fill="#1d9b1d"/><path d="M9 10.500 L11 12.800 L14.200 8" stroke="#fff" stroke-width="1.500" fill="none"/></svg>
<svg class="b" style="left:1027px;top:868px;" width="16" height="16" viewBox="0 0 16 16"><circle cx="7.500" cy="7.500" r="7.300" fill="#4b95e8"/><ellipse cx="6" cy="5" rx="5" ry="3.500" fill="#d8ecff" opacity=".8"/><rect x="5.800" y="1.500" width="2.400" height="8" rx="1" fill="#e0121a"/><circle cx="7" cy="12" r="1.500" fill="#e0121a"/><path d="M10 7 H14 V11 H16 L12 15.500 L8 11 H10 Z" fill="#43b52e" stroke="#2a8a1c" stroke-width=".4"/></svg>
<svg class="b" style="left:1051px;top:867px;" width="16" height="17" viewBox="0 0 16 17"><path d="M1 12.500 L11.500 1 L15 4.500 L4 16 Z" fill="#d9d9d9"/><path d="M1 12.500 L11.500 1 L12.700 2.200 L2.200 13.700 Z" fill="#f5f5f5"/><path d="M3 14.500 L13.500 3.500" stroke="#9a9a9a" stroke-width=".8"/></svg>
<svg class="b" style="left:1075px;top:868px;" width="16" height="16" viewBox="0 0 16 16"><path d="M8 0.800 L15.200 8 L8 15.200 L0.800 8 Z" fill="#5f5f5f" stroke="#e9e9e9" stroke-width="1.100"/><path d="M8 2.500 L13.500 8 L8 8 Z" fill="#7b7b7b"/></svg>
<svg class="b" style="left:1100px;top:868px;" width="15" height="15" viewBox="0 0 15 15"><rect x="0" y="0" width="15" height="15" rx="3" fill="#fdfdfd"/><path d="M4 11 A2.500 2.500 0 0 1 3.800 6.200 A3.500 3.500 0 0 1 10.300 5.500 A2.900 2.900 0 0 1 11.500 11 Z" fill="#3fa4f3"/></svg>
<svg class="b" style="left:1123px;top:869px;" width="17" height="15" viewBox="0 0 17 15"><rect x="0" y="0" width="16.500" height="14.500" rx="1.500" fill="#d19b27"/><circle cx="6.500" cy="9.500" r="2.200" fill="#fff"/><path d="M2 6 C6 2 12 3 14 8" stroke="#fff" stroke-width="1.300" fill="none"/><path d="M3 2.500 C8 -0.500 14 1 15.500 5.500" stroke="#fff" stroke-width="1" fill="none" opacity=".85"/><path d="M10 12.500 C11.500 11 11.500 8.500 10 7" stroke="#fff" stroke-width="1" fill="none"/></svg>
<svg class="b" style="left:1147px;top:869px;" width="17" height="15" viewBox="0 0 17 15"><rect x="4.500" y="1" width="11.500" height="8.500" fill="none" stroke="#fff" stroke-width="1.200"/><path d="M10.200 9.500 V12.500 M6 13 H14.500" stroke="#fff" stroke-width="1.200"/><path d="M0.600 1 H4.500 M0.600 1 V4 H4.500 M2.500 4 V13 H6" stroke="#fff" stroke-width="1.100" fill="none"/></svg>
<svg class="b" style="left:1170px;top:869px;" width="18" height="14" viewBox="0 0 18 14"><path d="M0.800 4.500 H3.500 L7 1 V13 L3.500 9.500 H0.800 Z" fill="none" stroke="#fff" stroke-width="1.200"/><path d="M9 4.500 A3.500 3.500 0 0 1 9 9.500" stroke="#fff" stroke-width="1.100" fill="none"/><path d="M11.200 2.800 A6 6 0 0 1 11.200 11.200" stroke="#fff" stroke-width="1.100" fill="none"/><path d="M14 1 A9 9 0 0 1 14 13" stroke="#9a9a9a" stroke-width="1" fill="none"/></svg>
<div class="b" style="left:1195px;top:868px;width:14px;height:13px;background:linear-gradient(#9a9a9a,#6f6f6f);"></div>
<span class="t" style="left:1196.50px;top:867.00px;font:700 9px/14px 'Liberation Sans', sans-serif;color:#fff;transform-origin:0 50%;transform:scaleX(0.8451);">vm</span>
<div class="b" style="left:1219px;top:868px;width:16px;height:15px;background:linear-gradient(#a5a5a5,#777);"></div>
<span class="t" style="left:1221.00px;top:867.00px;font:700 11px/16px 'Liberation Sans', sans-serif;color:#fff;transform-origin:0 50%;transform:scaleX(0.9044);">K!</span>
<svg class="b" style="left:1227px;top:877px;" width="8" height="6" viewBox="0 0 8 6"><path d="M0.500 0.500 H7.500 V5.500 H0.500 Z M0.500 0.500 L4 3.500 L7.500 0.500" fill="#cfcfcf" stroke="#eee" stroke-width=".6"/></svg>
<svg class="b" style="left:1243px;top:868px;" width="16" height="16" viewBox="0 0 16 16"><rect x="2" y="0.500" width="7" height="5.500" fill="#0f3cf2" stroke="#e6e6e6" stroke-width="1"/><path d="M0.500 8 H10.500 M5.500 6 V8" stroke="#d9d9d9" stroke-width="1.100"/><path d="M11 1.500 C14 1 14.500 5.500 11 6.500" stroke="#d01818" stroke-width="1.300" fill="none"/><path d="M4 14.500 C4 10 7 9 9 9 C12 9 13.500 11 13.500 14.500 Z" fill="#bdbdbd" stroke="#000" stroke-width=".5"/><path d="M0.500 15 H15.500" stroke="#000" stroke-width="1.200"/></svg>
<svg class="b" style="left:1266px;top:867px;" width="18" height="18" viewBox="0 0 18 18"><path d="M0.500 0.500 H17.500 V13.500 H11.500 L9 16.500 L6.500 13.500 H0.500 Z" fill="#fff"/><path d="M3.500 4 H14.500 M3.500 7 H14.500 M3.500 10 H11" stroke="#1f1f1f" stroke-width="1.300"/></svg>
<span class="t" style="left:1294.20px;top:858.30px;font:400 12px/18px 'Liberation Sans', sans-serif;color:#fff;transform-origin:0 50%;transform:scaleX(0.8602);">DEU</span>
<span class="t" style="left:1296.50px;top:875.00px;font:400 12px/18px 'Liberation Sans', sans-serif;color:#fff;transform-origin:0 50%;transform:scaleX(0.8044);">DEI</span>
<span class="t" style="left:1347.70px;top:858.30px;font:400 12px/18px 'Liberation Sans', sans-serif;color:#fff;transform-origin:0 50%;transform:scaleX(0.8758);">13:39</span>
<span class="t" style="left:1332.90px;top:875.00px;font:400 12px/18px 'Liberation Sans', sans-serif;color:#fff;transform-origin:0 50%;transform:scaleX(0.9007);">29.08.2015</span>
</body></html>
